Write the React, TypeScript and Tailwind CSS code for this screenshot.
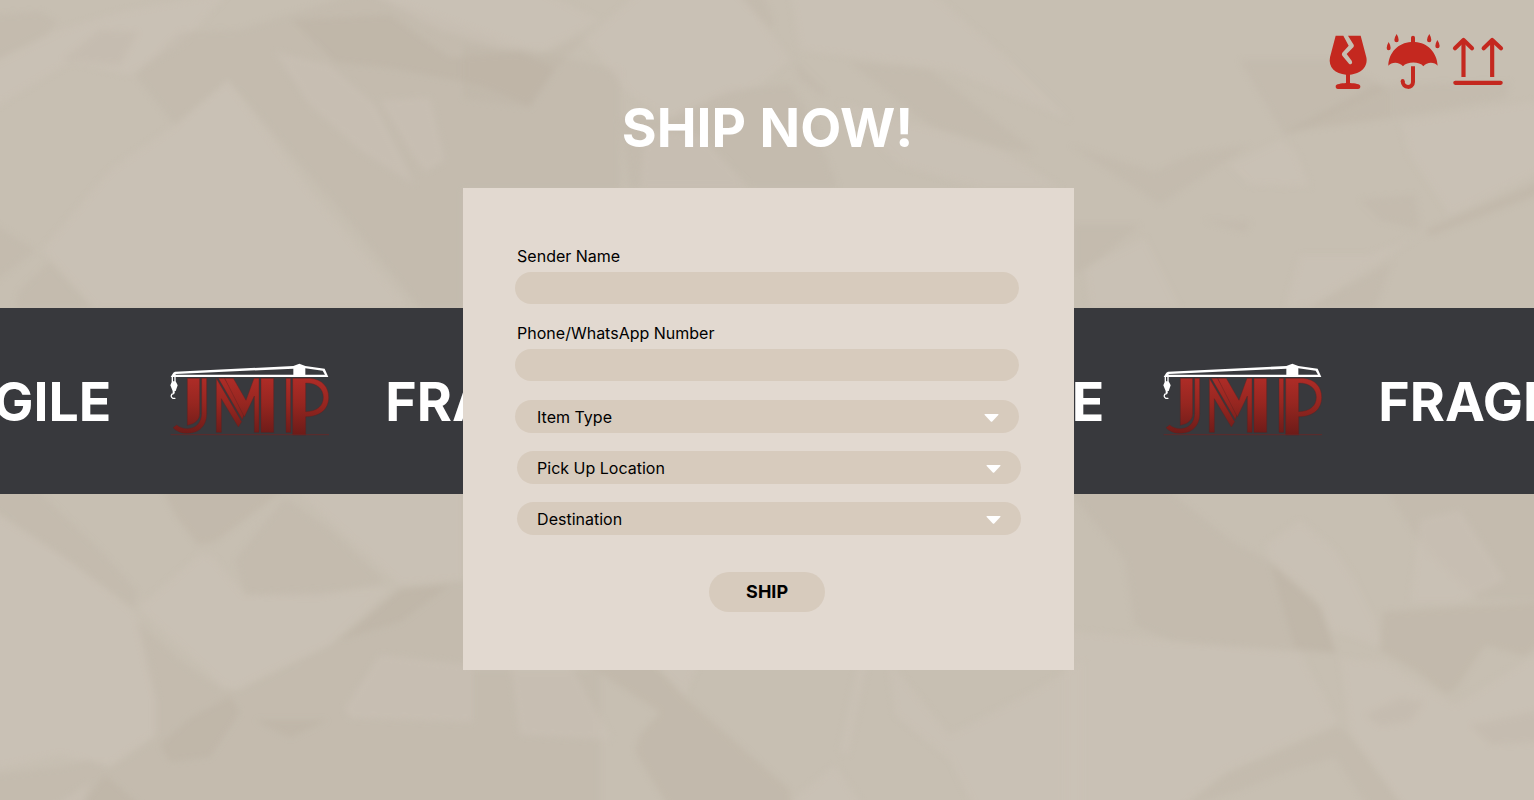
import React from "react";

type Fold = { points: string; tone: "dark" | "deep" | "light" };

const folds: Fold[] = [
  { tone: "light", points: "42,250 110,170 175,125 228,80 310,190 410,308 95,308" },
  { tone: "light", points: "60,30 120,12 230,-9 180,45 130,75 70,62 -9,110 -9,65" },
  { tone: "dark", points: "-9,15 40,12 57,22 45,35 -9,62" },
  { tone: "dark", points: "180,32 240,30 365,-9 530,50 620,70 620,190 463,190 463,308 420,308 340,210 228,80 175,125 135,75" },
  { tone: "deep", points: "292,20 390,15 450,58 520,52 555,68 530,106 480,85 390,68 335,62" },
  { tone: "light", points: "275,52 330,65 375,105 415,185 360,150 310,105" },
  { tone: "light", points: "380,100 430,98 445,160 425,172 410,150" },
  { tone: "light", points: "365,-9 540,-9 600,20 545,50 500,48 440,30" },
  { tone: "dark", points: "463,45 540,55 587,35 555,70 530,108 463,98" },
  { tone: "light", points: "585,40 640,-9 740,-9 780,45 790,60 760,85 715,100 670,120 630,95" },
  { tone: "dark", points: "735,-9 760,-9 774,20 770,30" },
  { tone: "dark", points: "795,60 825,90 825,97 800,80" },
  { tone: "dark", points: "620,118 670,118 730,90 790,85 812,120 838,188 630,188" },
  { tone: "light", points: "645,130 700,135 750,188 640,188" },
  { tone: "light", points: "838,102 930,128 1000,150 1062,188 980,188 900,165" },
  { tone: "dark", points: "850,62 930,70 1036,152 1000,148 930,125" },
  { tone: "light", points: "790,-9 930,-9 1010,60 1070,120 950,70 800,50" },
  { tone: "dark", points: "-9,222 35,250 -9,285" },
  { tone: "dark", points: "15,308 20,290 50,262 92,308" },
  { tone: "dark", points: "62,60 100,30 138,32 120,65" },
  { tone: "dark", points: "1070,145 1100,155 1155,172 1190,155 1250,145 1160,204" },
  { tone: "dark", points: "1240,60 1330,60 1390,88 1285,136" },
  { tone: "deep", points: "1285,132 1375,85 1390,90 1390,118" },
  { tone: "dark", points: "1390,85 1510,82 1505,98 1390,118" },
  { tone: "light", points: "1400,122 1543,100 1543,170 1450,215 1410,155" },
  { tone: "light", points: "1230,165 1280,140 1295,150 1310,187 1250,185" },
  { tone: "deep", points: "1425,230 1543,180 1543,193 1430,236" },
  { tone: "dark", points: "1310,308 1392,262 1375,308" },
  { tone: "dark", points: "1074,225 1140,225 1085,270 1074,272" },
  { tone: "light", points: "1085,268 1145,238 1180,308 1090,308" },
  { tone: "dark", points: "1203,220 1250,222 1245,232" },
  { tone: "dark", points: "1360,200 1415,195 1420,230 1380,220" },
  { tone: "light", points: "1300,255 1370,255 1420,235 1310,306 1285,308" },
  { tone: "light", points: "-9,510 70,560 130,608 140,620 157,700 157,733 110,766 60,755 -9,770" },
  { tone: "dark", points: "-9,484 30,484 100,550 138,592 133,608 70,562 -9,508" },
  { tone: "deep", points: "160,484 292,484 215,542 198,545 175,515" },
  { tone: "light", points: "200,554 212,556 245,595 390,588 330,645 235,690 222,685 138,608" },
  { tone: "light", points: "290,484 463,484 463,580 400,585" },
  { tone: "dark", points: "285,498 330,530 385,582 320,596 245,595 235,560" },
  { tone: "dark", points: "136,620 180,660 222,690 240,690 330,645 400,588 473,580 473,670 600,670 600,809 -9,809 -9,775 60,767 90,760 110,768 155,738 155,700" },
  { tone: "deep", points: "160,745 190,718 230,697 240,712 210,757 170,762" },
  { tone: "deep", points: "255,720 328,720 290,738" },
  { tone: "deep", points: "340,640 400,590 450,585 400,622" },
  { tone: "light", points: "345,708 380,655 473,665 473,722 350,718" },
  { tone: "light", points: "50,809 90,782 80,809" },
  { tone: "deep", points: "80,809 105,775 145,809" },
  { tone: "light", points: "510,660 568,660 612,740 520,735" },
  { tone: "deep", points: "580,660 650,660 682,695 790,790 790,809 670,809 635,752 640,735 660,712" },
  { tone: "light", points: "650,660 700,660 685,695" },
  { tone: "light", points: "795,798 835,765 865,809 800,809" },
  { tone: "light", points: "888,660 950,735 1035,690 1084,660 1084,809 975,809 950,760 895,715" },
  { tone: "light", points: "840,750 858,660 868,660 848,755" },
  { tone: "dark", points: "1064,484 1160,484 1230,540 1270,562 1320,607 1336,653 1200,645 1170,640 1135,625 1125,560" },
  { tone: "deep", points: "1270,562 1320,607 1336,653 1295,648 1285,615" },
  { tone: "light", points: "1064,630 1180,642 1300,652 1338,722 1225,772 1180,809 1064,809" },
  { tone: "light", points: "1300,520 1335,550 1355,580 1375,620 1382,647 1330,630 1318,600 1270,560 1265,545" },
  { tone: "dark", points: "1383,484 1543,484 1543,600 1480,600 1425,550" },
  { tone: "light", points: "1420,520 1460,510 1505,580 1460,602 1410,602" },
  { tone: "deep", points: "1383,612 1543,602 1543,640 1525,656 1485,645 1455,690 1445,693 1415,670 1380,650" },
  { tone: "light", points: "1340,658 1385,662 1455,705 1543,650 1543,809 1405,809 1350,735" },
  { tone: "dark", points: "1365,715 1400,698 1424,702 1410,722 1380,726" },
  { tone: "dark", points: "1180,809 1225,775 1338,727 1350,735 1405,809 1370,809 1335,757 1290,770 1240,790" },
  { tone: "dark", points: "1470,725 1543,710 1543,742 1490,745" },
];

const tones = {
  dark: { fill: "#bdb4a4", opacity: 0.3 },
  deep: { fill: "#b5ab9b", opacity: 0.26 },
  light: { fill: "#cbc3b9", opacity: 0.45 },
};

function Paper() {
  return (
    <svg className="col-start-1 row-start-1 h-[800px] w-full" viewBox="0 0 1534 800" preserveAspectRatio="none" aria-hidden="true">
      <defs>
        <filter id="crease" filterUnits="userSpaceOnUse" x="-20" y="-20" width="1574" height="840" colorInterpolationFilters="sRGB">
          <feGaussianBlur stdDeviation="3" />
        </filter>
      </defs>
      <rect width="1534" height="800" fill="#c7bfb2" />
      <g filter="url(#crease)">
        {folds.map((f, i) => (
          <polygon key={i} points={f.points} fill={tones[f.tone].fill} fillOpacity={tones[f.tone].opacity} />
        ))}
      </g>
    </svg>
  );
}

function HandlingMarks() {
  return (
    <svg className="h-20 w-[210px]" viewBox="0 0 630 240" fill="#c4281f" role="img" aria-label="Handling marks">
      <path d="M77 47 H100 L116 77 L97 98 Q94 102 97 107 L117 131 Q121 135 125 131 Q128 127 125 122 L110 102 L130 82 Q133 78 131 74 L114 47 H152 L169 112 C175 142 151 162 120 164 V189 C135 190 151 192 151 199 C151 205 149 207 144 207 H84 C79 207 77 205 77 199 C77 192 94 190 108 189 V164 C76 162 54 142 60 112 Z" />
      <path d="M303 66 V53 Q303 47 309 47 Q315 47 315 53 V66 C352 68 381 97 383 137 C374 125 350 125 340 139 C329 124 291 124 279 139 C268 125 245 125 235 137 C236 98 265 68 303 66 Z" />
      <path d="M309 139 V186 C309 206 278 206 278 183" fill="none" stroke="#c4281f" strokeWidth="12" />
      <circle cx="278" cy="183" r="6" />
      <path d="M260 42 Q266 52 266 60 Q266 67 260 67 Q253 67 253 60 Q253 52 260 42Z M236 66 Q242 76 242 84 Q242 91 236 91 Q230 91 230 84 Q230 76 236 66Z M358 42 Q364 52 364 60 Q364 67 358 67 Q351 67 351 60 Q351 52 358 42Z M382 60 Q389 70 389 78 Q389 85 382 85 Q376 85 376 78 Q376 70 382 60Z" />
      <g fill="none" stroke="#c4281f" strokeWidth="12.5" strokeLinejoin="round">
        <path d="M460.5 171 V60 M546.5 171 V60" />
        <path d="M435 85 L460.5 60 L486 85 M521 85 L546.5 60 L573 85" strokeLinecap="round" />
        <path d="M436 188.5 H572" strokeLinecap="round" />
      </g>
    </svg>
  );
}

function Logo({ id }: { id: string }) {
  return (
    <svg className="mb-[7.4px] h-[95px] w-[190px] shrink-0" viewBox="0 0 570 285" role="img" aria-label="JMP">
      <defs>
        <linearGradient id={id} gradientUnits="userSpaceOnUse" x1="0" y1="85" x2="0" y2="255">
          <stop offset="0" stopColor="#ae2c27" />
          <stop offset="0.45" stopColor="#962620" />
          <stop offset="1" stopColor="#6c1b18" />
        </linearGradient>
      </defs>
      <g fill={`url(#${id})`} stroke="#5b2220" strokeWidth="1.2">
        <path d="M97 85 H134 V190 Q134 219 97 226 Z" />
        <path d="M140 85 H155 V190 C155 235 125 250 95 250 C77 250 63 242 54 233 L65 225 C75 233 85 236 97 236 C122 236 140 218 140 190 Z" />
        <path d="M184 247 V85 L260 215 L250 231 L199 146 V247 Z" />
        <path d="M190 85 H209 L236 130 L268 190 L262 209 Z" />
        <path d="M209 85 H235 L273 151 L297 85 H312 V247 H298 V138 L268 201 Z" />
        <path d="M318 85 H356 V247 H318 Z" />
        <path d="M393 85 H407 V247 H393 Z" />
        <path d="M413 85 H465 C503 88 521 112 521 142 C521 175 499 200 452 200 V255 H413 Z M452 99 V185 C486 185 505 167 505 142 C505 116 486 99 452 99 Z" fillRule="evenodd" />
      </g>
      <path d="M47 254 H522" stroke="#6c2524" strokeWidth="2.5" opacity="0.9" />
      <g fill="#fff">
        <path d="M47 81 L55 68 L60 65 L415 48 L433 41 L451 48 L509 56 L520 81 Z M61 74 H415 V56 L63 72 Z M451 55 V74 H510 L503 62 Z" fillRule="evenodd" />
        <path d="M50 78 H54 V97 H50 Z M58 78 H62 V97 H58 Z M51 94 H62 L68 106 L62 123 H59 V130 H53 V123 L46 106 Z" />
        <path d="M56 126 V131 L50 133 Q46 141 53 145 L60 145" fill="none" stroke="#fff" strokeWidth="3.5" strokeLinecap="round" />
      </g>
    </svg>
  );
}

function Ribbon() {
  return (
    <div className="col-start-1 row-start-1 mt-[308.4px] flex h-[185.4px] items-center overflow-hidden bg-[#38393d]">
      <div className="ml-[-113px] flex w-max items-center">
        {["a", "b", "c", "d"].map((k) => (
          <div key={k} className="flex w-[496.5px] shrink-0 items-center">
            <span className="mt-px w-[268px] shrink-0 pl-[1.8px] text-[53.6px] leading-[60px] font-bold text-white">FRAGILE</span>
            <Logo id={`logo-${k}`} />
          </div>
        ))}
      </div>
    </div>
  );
}

function TextField({ label }: { label: string }) {
  return (
    <label className="flex flex-col">
      <span className="ml-[1.6px] h-[26px] text-base leading-5">{label}</span>
      <input className="h-8 w-[504px] rounded-full bg-[#d7cbbd] px-5 outline-none" />
    </label>
  );
}

function Picker({ label, shifted = false }: { label: string; shifted?: boolean }) {
  return (
    <button
      type="button"
      className={
        shifted
          ? "ml-[1.6px] flex h-[32.4px] w-[504px] items-center justify-between rounded-full bg-[#d7cbbd] pr-5 pl-[20px] text-base"
          : "flex h-[32.4px] w-[504px] items-center justify-between rounded-full bg-[#d7cbbd] pr-5 pl-[21.6px] text-base"
      }
    >
      <span>{label}</span>
      <svg className="mt-0.5 h-2 w-[15px]" viewBox="0 0 15 8" fill="#fff">
        <path d="M1 0 H14 Q15 0 14.3 0.9 L8.2 7.4 Q7.5 8 6.8 7.4 L0.7 0.9 Q0 0 1 0Z" />
      </svg>
    </button>
  );
}

export default function App() {
  return (
    <div className="grid h-[800px] w-full grid-cols-1 grid-rows-[800px] items-start overflow-hidden font-['Inter',sans-serif] text-black">
      <Paper />
      <Ribbon />
      <div className="z-10 col-start-1 row-start-1 flex flex-col">
        <header className="flex h-[100px] justify-end pt-5 pr-3.5">
          <HandlingMarks />
        </header>
        <h1 className="h-[87.6px] pl-px text-center text-[53.3px] leading-[56px] font-bold text-white [word-spacing:1px]">SHIP NOW!</h1>
        <form className="ml-[463.2px] flex h-[482px] w-[610.6px] flex-col bg-[#e2d9d0] pt-[58.4px] pl-[52.3px]">
          <TextField label="Sender Name" />
          <div className="mt-[19.5px]">
            <TextField label="Phone/WhatsApp Number" />
          </div>
          <div className="mt-[19px] flex flex-col gap-[18.6px]">
            <Picker label="Item Type" />
            <Picker label="Pick Up Location" shifted />
            <Picker label="Destination" shifted />
          </div>
          <button type="button" className="mt-[37.2px] ml-[193.6px] h-[39.5px] w-[116px] rounded-full bg-[#d7cbbd] pt-px text-lg font-bold">
            SHIP
          </button>
        </form>
      </div>
    </div>
  );
}
